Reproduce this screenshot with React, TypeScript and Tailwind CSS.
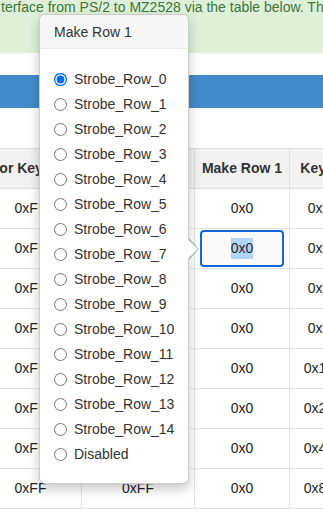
import React from 'react';

const strobeOptions = [
  ...Array.from({ length: 15 }, (_, i) => `Strobe_Row_${i}`),
  'Disabled',
];

const keyMasks = ['0x1', '0x2', '0x4', '0x8', '0x10', '0x20', '0x40', '0x80'];

const Radio = ({ checked }: { checked: boolean }) => (
  <svg width="13" height="13" viewBox="0 0 13 13" className="shrink-0">
    {checked ? (
      <>
        <circle cx="6.5" cy="6.5" r="5.9" fill="#fff" stroke="#0a6cf5" strokeWidth="1.3" />
        <circle cx="6.5" cy="6.5" r="3.9" fill="#0a6cf5" />
      </>
    ) : (
      <circle cx="6.5" cy="6.5" r="6" fill="#fff" stroke="#767676" strokeWidth="1" />
    )}
  </svg>
);

const App = () => {
  return (
    <div className="relative w-[323px] h-[518px] overflow-hidden bg-white font-['Liberation_Sans',Arial,sans-serif] text-[14px] text-[#333]">
      {/* Info alert */}
      <div className="h-[53px] bg-[#dff0d8] text-[#3c763d] whitespace-nowrap leading-[15px] pl-[1px]">
        terface from PS/2 to MZ2528 via the table below. The changes are applied immediately.
      </div>

      {/* Toolbar bar */}
      <div className="mt-[22px] h-[33px] bg-[#428bca]" />

      {/* Mapping table */}
      <div className="mt-[40px] -ml-[21px]">
        <table className="table-fixed border-collapse w-[430px]">
          <colgroup>
            <col className="w-[102px]" />
            <col className="w-[113px]" />
            <col className="w-[95px]" />
            <col className="w-[59px]" />
            <col className="w-[61px]" />
          </colgroup>
          <thead>
            <tr className="bg-[#f2f2f2]">
              <th className="h-[40px] p-0 indent-[-4px] border border-[#dedede] font-bold whitespace-nowrap text-center">Major Keyboard</th>
              <th className="h-[40px] p-0 border border-[#dedede] font-bold whitespace-nowrap text-center">Minor Key</th>
              <th className="h-[40px] p-0 border border-[#dedede] font-bold whitespace-nowrap text-center">Make Row 1</th>
              <th className="h-[40px] p-0 border border-[#dedede] font-bold whitespace-nowrap text-center">Key 1</th>
              <th className="h-[40px] p-0 border border-[#dedede] font-bold whitespace-nowrap text-center">Make Row 2</th>
            </tr>
          </thead>
          <tbody>
            {keyMasks.map((mask, i) => (
              <tr key={mask}>
                <td className="h-[40px] p-0 border border-[#e3e3e3] text-center text-[#222]">0xFF</td>
                <td className="h-[40px] p-0 border border-[#e3e3e3] text-center text-[#222]">0xFF</td>
                {i === 1 ? (
                  <td className="h-[40px] px-[5px] py-0 border border-[#e3e3e3]">
                    <div className="h-[37px] rounded-[4px] border-2 border-[#1466d6] bg-[#fafafa] flex items-center justify-center text-[#222]">
                      <span className="bg-[#b3d4fc]">0x0</span>
                    </div>
                  </td>
                ) : (
                  <td className="h-[40px] p-0 border border-[#e3e3e3] text-center text-[#222]">0x0</td>
                )}
                <td className="h-[40px] p-0 border border-[#e3e3e3] text-center text-[#222]">{mask}</td>
                <td className="h-[40px] p-0 border border-[#e3e3e3] text-center text-[#222]">0x0</td>
              </tr>
            ))}
          </tbody>
        </table>
      </div>

      {/* Popover editor */}
      <div className="absolute left-[39px] top-[14px] w-[150px] rounded-[6px] border border-[rgba(0,0,0,0.2)] bg-white shadow-[0_5px_12px_rgba(0,0,0,0.22)]">
        <div className="h-[34px] flex items-center pt-[2px] pl-[14px] bg-[#f7f7f7] border-b border-[#ebebeb] rounded-t-[5px]">
          Make Row 1
        </div>
        <div className="pt-[18px] pb-[16px] pl-[14px]">
          {strobeOptions.map((opt, i) => (
            <label key={opt} className="h-[25px] flex items-center gap-[7px]">
              <Radio checked={i === 0} />
              <span>{opt}</span>
            </label>
          ))}
        </div>
        <svg width="11" height="22" viewBox="0 0 11 22" className="absolute right-[-11px] top-[223px]">
          <polygon points="1,0 11,11 1,22" fill="rgba(0,0,0,0.25)" />
          <polygon points="0,1.4 9.6,11 0,20.6" fill="#fff" />
        </svg>
      </div>
    </div>
  );
};

export default App;
